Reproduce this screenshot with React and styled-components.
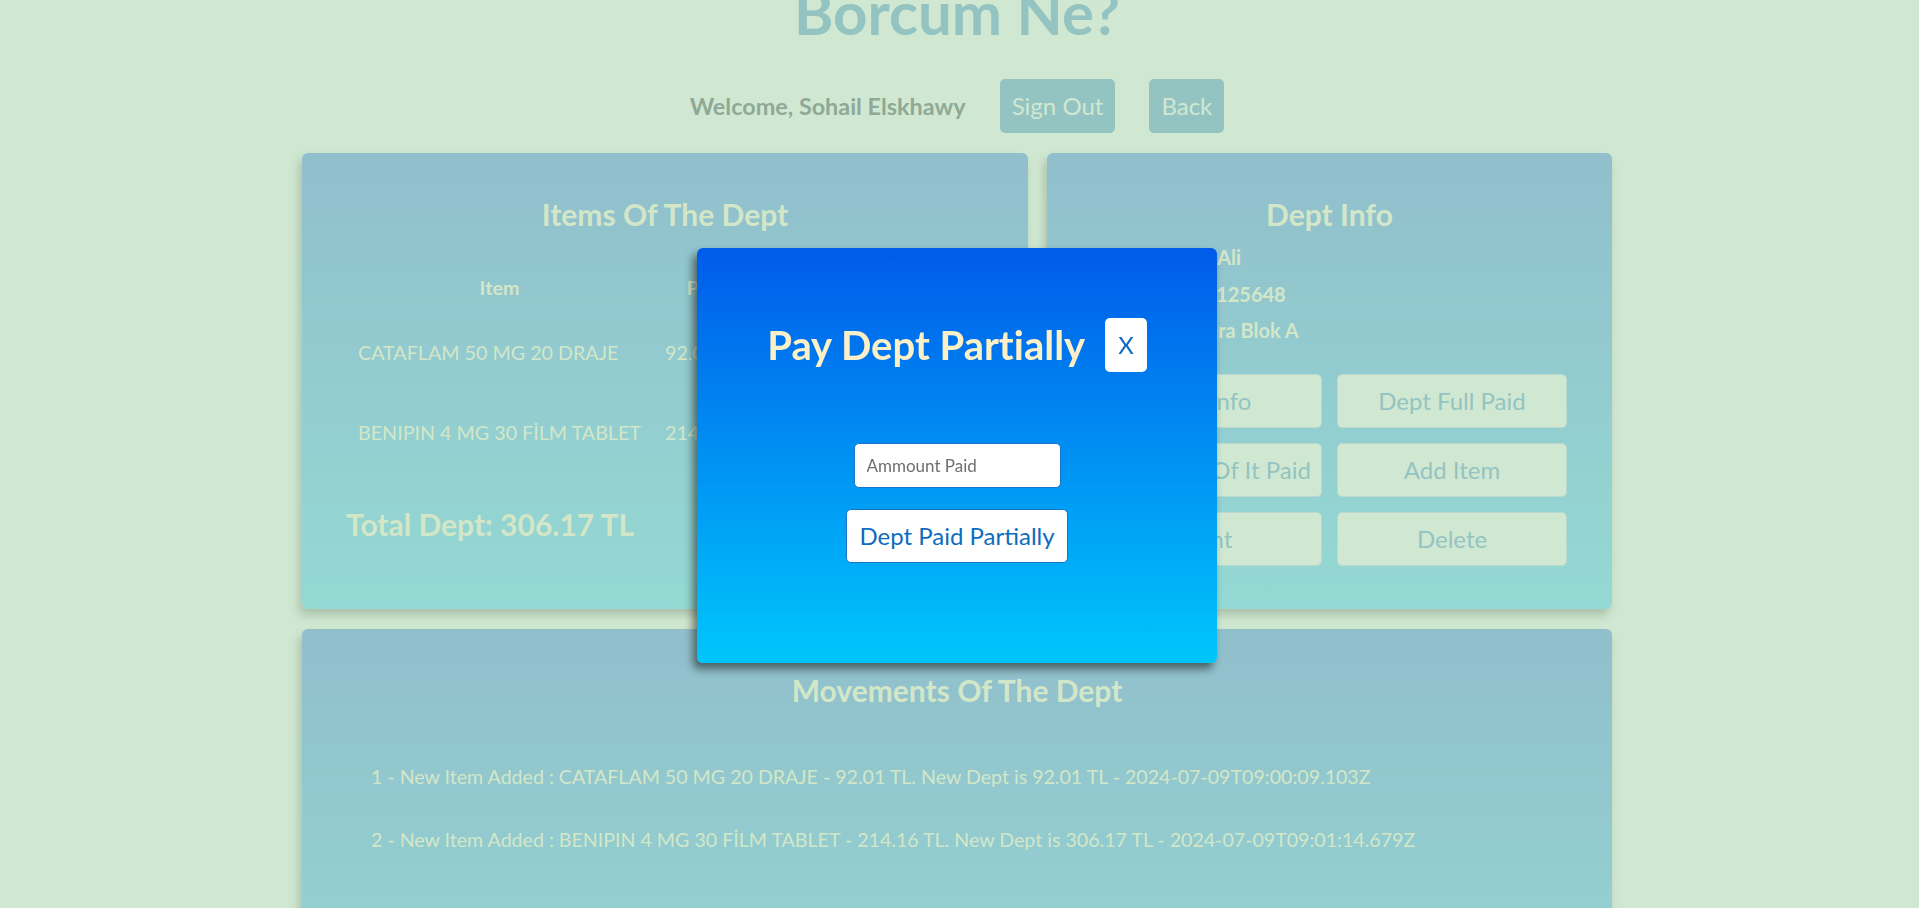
import React from "react";
import styled, { createGlobalStyle } from "styled-components";

const GlobalStyle = createGlobalStyle`
  html, body {
    margin: 0;
    padding: 0;
    background: #d0e8d1;
    font-family: Lato, "Open Sans", sans-serif;
    font-variant-ligatures: no-common-ligatures;
    overflow: hidden;
  }
  * { box-sizing: border-box; }
`;

const Page = styled.div`
  padding-right: 5px;
  min-height: 908px;
`;

const SiteTitle = styled.h1`
  margin: -24.2px 0 31.2px;
  font-size: 60px;
  line-height: 72px;
  font-weight: 700;
  text-align: center;
  color: #93c4c2;
`;

const UserBar = styled.div`
  display: flex;
  justify-content: center;
  align-items: center;
  gap: 34px;
`;

const Welcome = styled.span`
  font-size: 23.4px;
  font-weight: 700;
  color: #8fa996;
`;

const TopButton = styled.button`
  font-family: inherit;
  font-size: 24px;
  line-height: 30px;
  padding: 12px 12px;
  border: none;
  border-radius: 5px;
  background: #93c4c2;
  color: #d0e8d1;
`;

const Content = styled.div`
  width: 1310px;
  margin: 20px auto 0;
`;

const CardsRow = styled.div`
  display: grid;
  grid-template-columns: 726px 565px;
  column-gap: 19px;
  align-items: stretch;
`;

const Card = styled.section`
  background: linear-gradient(to bottom, #91bfcc, #94d9d3);
  border-radius: 6px;
  padding: 20px 44px;
  box-shadow: -3px 6px 10px rgba(70, 90, 70, 0.28);
  color: #d3e7c8;
  margin-top: ${(p) => p.$top || "0"};
`;

const CardTitle = styled.h2`
  margin: 23.4px 0 ${(p) => p.$after || "13px"};
  font-size: 30px;
  line-height: 36px;
  font-weight: 700;
  text-align: center;
`;

const ItemsTable = styled.table`
  border-collapse: collapse;
  border-spacing: 0;
`;

const HeadCell = styled.th`
  font-size: 19.7px;
  line-height: 24px;
  font-weight: 700;
  padding: 13px 12px;
  text-align: center;
`;

const Cell = styled.td`
  font-size: 19.7px;
  line-height: 24px;
  padding: 28px 12px;
  text-align: left;
`;

const Total = styled.h2`
  margin: 33px 0 0;
  font-size: 30px;
  line-height: 36px;
  font-weight: 700;
`;

const InfoList = styled.div`
  display: flex;
  flex-direction: column;
  gap: 12.5px;
`;

const InfoLine = styled.div`
  font-size: 20px;
  line-height: 24px;
  font-weight: 700;
`;

const ActionGrid = styled.div`
  display: grid;
  grid-template-columns: repeat(2, 230px);
  grid-auto-rows: 54px;
  gap: 15px;
  justify-content: center;
  margin: 31.6px 0 23px;
`;

const ActionButton = styled.button`
  font-family: inherit;
  font-size: 24px;
  background: #d0e8d1;
  color: #93c4c3;
  border: 1px solid #b9d9cf;
  border-radius: 5px;
`;

const MovementList = styled.div`
  padding-left: 25px;
  display: flex;
  flex-direction: column;
  gap: 40.1px;
  min-height: 300px;
`;

const Movement = styled.div`
  font-size: 19.6px;
  line-height: 23.6px;
`;

const Overlay = styled.div`
  position: fixed;
  inset: 0;
  display: flex;
  align-items: center;
  justify-content: center;
  padding: 3px 5px 0 0;
`;

const Modal = styled.div`
  width: 520px;
  height: 415px;
  border-radius: 6px;
  background: linear-gradient(to top, #00c6fb 0%, #005bea 100%);
  box-shadow: -4px 6px 8px rgba(0, 0, 0, 0.5);
  padding-top: 70px;
  display: flex;
  flex-direction: column;
  align-items: center;
`;

const ModalHead = styled.div`
  display: flex;
  align-items: center;
  gap: 20px;
`;

const ModalTitle = styled.h2`
  margin: 0;
  font-size: 40px;
  line-height: 48px;
  font-weight: 700;
  color: #fcf0c9;
`;

const CloseButton = styled.button`
  font-family: inherit;
  font-size: 24px;
  line-height: 30px;
  padding: 12px 13px;
  border: none;
  border-radius: 5px;
  background: #ffffff;
  color: #0d6cc0;
`;

const AmountInput = styled.input`
  margin-top: 71px;
  width: 207px;
  height: 45px;
  padding: 0 12px;
  font-family: inherit;
  font-size: 17px;
  border: 1px solid #1a73c8;
  border-radius: 5px;
  background: #fff;
  outline: none;
  &::placeholder {
    color: #6f6f6f;
  }
`;

const SubmitButton = styled.button`
  margin-top: 21px;
  font-family: inherit;
  font-size: 24px;
  line-height: 30px;
  padding: 11px 12px;
  border: 1px solid #1a73c8;
  border-radius: 5px;
  background: #ffffff;
  color: #0d6cc0;
`;

const items = [
  { name: "CATAFLAM 50 MG 20 DRAJE", price: "92.01 TL" },
  { name: "BENIPIN 4 MG 30 FİLM TABLET", price: "214.16 TL" },
];

const movements = [
  "1 - New Item Added : CATAFLAM 50 MG 20 DRAJE - 92.01 TL. New Dept is 92.01 TL - 2024-07-09T09:00:09.103Z",
  "2 - New Item Added : BENIPIN 4 MG 30 FİLM TABLET - 214.16 TL. New Dept is 306.17 TL - 2024-07-09T09:01:14.679Z",
];

const actions = ["Edit Info", "Dept Full Paid", "Dept Part Of It Paid", "Add Item", "Print", "Delete"];

export default function App() {
  return (
    <>
      <GlobalStyle />
      <Page>
        <SiteTitle>Borcum Ne?</SiteTitle>
        <UserBar>
          <Welcome>Welcome, Sohail Elskhawy</Welcome>
          <TopButton>Sign Out</TopButton>
          <TopButton>Back</TopButton>
        </UserBar>
        <Content>
          <CardsRow>
            <Card>
              <CardTitle $after="31px">Items Of The Dept</CardTitle>
              <ItemsTable>
                <thead>
                  <tr>
                    <HeadCell>Item</HeadCell>
                    <HeadCell>Price</HeadCell>
                  </tr>
                </thead>
                <tbody>
                  {items.map((it) => (
                    <tr key={it.name}>
                      <Cell>{it.name}</Cell>
                      <Cell>{it.price}</Cell>
                    </tr>
                  ))}
                </tbody>
              </ItemsTable>
              <Total>Total Dept: 306.17 TL</Total>
            </Card>
            <Card>
              <CardTitle>Dept Info</CardTitle>
              <InfoList>
                <InfoLine>Name: Ahmet Ali</InfoLine>
                <InfoLine>Phone: 05334125648</InfoLine>
                <InfoLine>Address: Ankara Blok A</InfoLine>
              </InfoList>
              <ActionGrid>
                {actions.map((a) => (
                  <ActionButton key={a}>{a}</ActionButton>
                ))}
              </ActionGrid>
            </Card>
          </CardsRow>
          <Card $top="20px">
            <CardTitle $after="56.2px">Movements Of The Dept</CardTitle>
            <MovementList>
              {movements.map((m) => (
                <Movement key={m}>{m}</Movement>
              ))}
            </MovementList>
          </Card>
        </Content>
      </Page>
      <Overlay>
        <Modal>
          <ModalHead>
            <ModalTitle>Pay Dept Partially</ModalTitle>
            <CloseButton>X</CloseButton>
          </ModalHead>
          <AmountInput placeholder="Ammount Paid" />
          <SubmitButton>Dept Paid Partially</SubmitButton>
        </Modal>
      </Overlay>
    </>
  );
}
